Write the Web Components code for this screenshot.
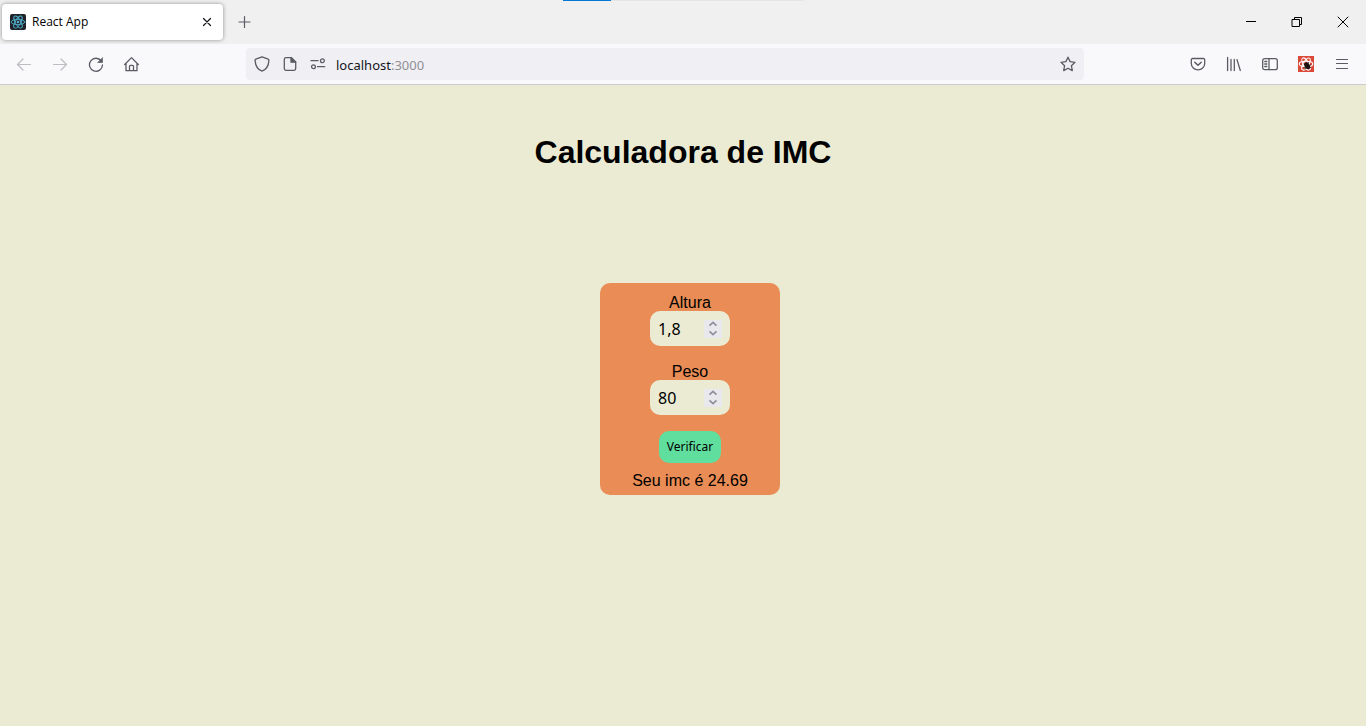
<!DOCTYPE html>
<html lang="pt-BR">
<head>
<meta charset="utf-8">
<title>React App</title>
<style>
html, body { margin: 0; height: 100%; }
body { font-family: "Liberation Sans", Arial, sans-serif; font-size: 16px; color: #000; background: #ebebd3; }
</style>
</head>
<body>
<browser-window>
  <tab-strip slot="tabs"><browser-tab>React App</browser-tab></tab-strip>
  <nav-bar slot="nav"><url-bar host="localhost" port=":3000"></url-bar></nav-bar>
  <imc-app></imc-app>
</browser-window>

<script>
const svg = (body, size = 16) =>
  `<svg width="${size}" height="${size}" viewBox="0 0 ${size} ${size}" fill="none" stroke="currentColor" stroke-width="1.3" stroke-linecap="round" stroke-linejoin="round" aria-hidden="true">${body}</svg>`;

const atom = (color, bg, width, extra = '') => `<rect width="16" height="16" ${bg} stroke="none"/>
  <g stroke="${color}" stroke-width="${width}"><ellipse cx="8" cy="8" rx="6.8" ry="2.7"/>
  <ellipse cx="8" cy="8" rx="6.8" ry="2.7" transform="rotate(60 8 8)"/>
  <ellipse cx="8" cy="8" rx="6.8" ry="2.7" transform="rotate(120 8 8)"/></g>
  <circle cx="8" cy="8" r="1.3" fill="${color}" stroke="none"/>${extra}`;

const icons = {
  react: svg(atom('#4fb3cf', 'rx="2" fill="#20232a"', .9)),
  devtools: svg(atom('#fff', 'fill="#db4a38"', 1.1,
    `<ellipse cx="9.200" cy="9.800" rx="2.500" ry="3.700" transform="rotate(-30 9.200 9.800)" fill="#1c1010" stroke="none"/>
     <path d="M6 8l6.500 3.500M6 11.500l6.500-2.500M7 13.300l3.500-6.800" stroke="#1c1010" stroke-width=".8"/>`)),
  tabClose: svg('<path d="M4.500 4.500l7 7M11.500 4.500l-7 7" stroke-width="1.2"/>'),
  plus: svg('<path d="M7.500 2.500v11M2 8h11" stroke-width="1.2"/>'),
  min: svg('<path d="M3 7.500h10" stroke-width="1" stroke-linecap="butt"/>'),
  restore: svg('<path d="M3.500 5.500h7v7h-7zM5.500 5V3.500h7v7H11" stroke-width="1" stroke-linejoin="miter" stroke-linecap="square"/>'),
  close: svg('<path d="M3 3l10 10M13 3L3 13" stroke-width="1"/>'),
  back: svg('<path d="M14.500 8.500h-13M7 3L1.500 8.500 7 14" stroke-width="1.2"/>'),
  forward: svg('<path d="M1.500 8.500h13M9 3l5.500 5.500L9 14" stroke-width="1.2"/>'),
  reload: svg('<path d="M13.300 5A6.500 6.500 0 1 0 14.500 9"/><path d="M14.500 2v4.500H10z" fill="currentColor" stroke-width=".7"/>'),
  home: svg('<path d="M.7 8.500L7.500 1.600l6.800 6.900M2 7.300v7.400h11V7.300M5.500 14.500V10.300a1 1 0 0 1 1-1h2a1 1 0 0 1 1 1v4.200"/>'),
  shield: svg('<path d="M8 .9l6.200 2.300c.6.200.8.600.7 1.200C14.600 9.500 12.500 13.500 8 15.200 3.500 13.500 1.400 9.500 1.100 4.400c-.1-.6.1-1 .7-1.200z"/>'),
  page: svg('<path d="M9.500 1.700H4A1.700 1.700 0 0 0 2.300 3.400v9.200A1.700 1.700 0 0 0 4 14.300h8a1.700 1.700 0 0 0 1.700-1.700V6z"/><path d="M9 1.700V6.200h4.700z" fill="currentColor"/>'),
  perms: svg('<path d="M1 4.700h7M7.500 10.700h7.200"/><circle cx="12.400" cy="4.700" r="1.900"/><circle cx="3.500" cy="10.700" r="1.900"/>'),
  star: svg('<path d="M8 1.200l2.100 4.400 4.900.7-3.600 3.400.9 4.900L8 12.200l-4.300 2.400.9-4.900L1 6.300l4.900-.7z"/>'),
  pocket: svg('<path d="M2.500 2.500h11a1.200 1.200 0 0 1 1.200 1.200V7.500a6.700 6.300 0 0 1-13.400 0V3.700a1.200 1.200 0 0 1 1.200-1.200z"/><path d="M4.800 6.300L8 9.300l3.200-3" stroke-width="1.500"/>'),
  library: svg('<path d="M1.600 1.500v13M5 3.500v11M8.300 3.500v11M11 3.600l3.300 10.900"/>'),
  sidebar: svg('<rect x=".7" y="2.700" width="14.600" height="11" rx="2"/><path d="M7 3v10.500M2.800 5.500h2M2.800 8h2M2.800 10.500h2"/>'),
  menu: svg('<path d="M2.500 3.500h11M2.500 7.500h11M2.500 12.500h11" stroke-width="1.200"/>'),
  up: '<svg width="10" height="6" viewBox="0 0 10 6" fill="none" stroke="#8f8f9d" stroke-width="1.700" aria-hidden="true"><path d="M1.500 4.700L5 1.400l3.500 3.300"/></svg>',
  down: '<svg width="10" height="6" viewBox="0 0 10 6" fill="none" stroke="#8f8f9d" stroke-width="1.700" aria-hidden="true"><path d="M1.500 1.300L5 4.600l3.500-3.300"/></svg>'
};

const define = (name, html, after) => customElements.define(name, class extends HTMLElement {
  constructor() {
    super();
    const t = document.createElement('template');
    t.innerHTML = html;
    this.attachShadow({ mode: 'open' }).append(t.content.cloneNode(true));
  }
  connectedCallback() { if (after) after(this, this.shadowRoot); }
});

define('icon-button', `<style>
  :host { display: flex; flex: none; width: 36px; height: 32px; color: #5b5b66; }
  :host([disabled]) { color: #bcbcc1; }
  button { all: unset; flex: 1; display: flex; align-items: center; justify-content: center; }
  svg { display: block; }
</style><button type="button"></button>`, (el, root) => {
  const b = root.querySelector('button');
  b.innerHTML = icons[el.getAttribute('icon')];
  b.setAttribute('aria-label', el.getAttribute('label'));
  b.disabled = el.hasAttribute('disabled');
});

define('browser-window', `<style>
  :host { display: flex; flex-direction: column; min-height: 100%; }
  main { flex: 1; background: #ebebd3; }
</style><slot name="tabs"></slot><slot name="nav"></slot><main><slot></slot></main>`);

define('tab-strip', `<style>
  :host { display: flex; align-items: center; position: relative; height: 44px; padding-left: 2px; background: #f0f0f0; }
  .load { position: absolute; top: 0; left: 0; right: 0; margin: 0 auto; width: 241px; height: 1px; background: #e5e5e5; }
  .load i { display: block; width: 20%; height: 1px; background: #0078d7; }
  .new { margin-left: 4px; }
  .win { display: flex; margin-left: auto; }
  .win icon-button { width: 46px; color: #000; }
</style>
<div class="load"><i></i></div>
<slot></slot>
<icon-button class="new" icon="plus" label="Nova aba"></icon-button>
<div class="win">
  <icon-button icon="min" label="Minimizar"></icon-button>
  <icon-button icon="restore" label="Restaurar"></icon-button>
  <icon-button icon="close" label="Fechar"></icon-button>
</div>`);

define('browser-tab', `<style>
  :host { display: flex; align-items: center; box-sizing: border-box; width: 221px; height: 36px; padding-left: 8px; border-radius: 4px; background: #fff; box-shadow: 0 0 4px rgba(0,0,0,.4); font: 12px/18px "Open Sans", sans-serif; }
  svg { display: block; margin-right: 6px; }
  span { flex: 1; }
  icon-button { width: 32px; color: #15141a; }
</style>${icons.react}<span><slot></slot></span><icon-button icon="tabClose" label="Fechar aba"></icon-button>`);

define('nav-bar', `<style>
  :host { display: flex; align-items: center; height: 40px; padding: 0 6px; background: #f9f9fb; border-bottom: 1px solid #ccccce; }
  ::slotted(url-bar) { flex: 1; margin: 0 96px; }
</style>
<icon-button icon="back" label="Voltar" disabled></icon-button>
<icon-button icon="forward" label="Avançar" disabled></icon-button>
<icon-button icon="reload" label="Recarregar"></icon-button>
<icon-button icon="home" label="Início"></icon-button>
<slot></slot>
<icon-button icon="pocket" label="Pocket"></icon-button>
<icon-button icon="library" label="Biblioteca"></icon-button>
<icon-button icon="sidebar" label="Painel lateral"></icon-button>
<icon-button icon="devtools" label="React Developer Tools"></icon-button>
<icon-button icon="menu" label="Menu"></icon-button>`);

define('url-bar', `<style>
  :host { display: flex; align-items: center; height: 32px; padding: 0 2px; box-sizing: border-box; border-radius: 4px; background: #f0f0f4; font: 13px/18px "Noto Sans", sans-serif; color: #15141a; }
  icon-button { width: 28px; }
  p { flex: 1; margin: 2px 4px 0; }
  .port { color: #8f8f94; }
</style>
<icon-button icon="shield" label="Proteção"></icon-button>
<icon-button icon="page" label="Informações do site"></icon-button>
<icon-button icon="perms" label="Permissões"></icon-button>
<p><span class="host"></span><span class="port"></span></p>
<icon-button icon="star" label="Favoritar"></icon-button>`, (el, root) => {
  root.querySelector('.host').textContent = el.getAttribute('host');
  root.querySelector('.port').textContent = el.getAttribute('port');
});

define('number-field', `<style>
  :host { display: flex; flex-direction: column; align-items: center; padding-top: 2px; line-height: 16px; }
  .box { display: flex; align-items: center; box-sizing: border-box; width: 80px; height: 35px; padding: 0 8px; border-radius: 10px; background: #ebebd3; }
  input { flex: 1; min-width: 0; padding: 0; border: 0; outline: 0; background: none; color: #000; font: 16px/20px "Noto Sans", sans-serif; }
  .spin { display: flex; flex-direction: column; width: 18px; height: 18px; background: #e9e9ed; }
  .spin button { all: unset; flex: 1; display: flex; align-items: center; justify-content: center; }
</style>
<label for="n"><slot></slot></label>
<div class="box"><input id="n" type="text" inputmode="decimal">
<div class="spin"><button type="button" aria-label="Aumentar">${icons.up}</button><button type="button" aria-label="Diminuir">${icons.down}</button></div></div>`, (el, root) => {
  const input = root.querySelector('input');
  const read = () => parseFloat(input.value.replace(',', '.')) || 0;
  input.value = el.getAttribute('value');
  root.querySelectorAll('button').forEach((b, i) => b.onclick = () => {
    const step = Number(el.getAttribute('step'));
    input.value = String(+(read() + (i ? -step : step)).toFixed(2)).replace('.', ',');
  });
  el.read = read;
});

define('imc-app', `<style>
  :host { display: flex; flex-direction: column; align-items: center; padding-top: 48px; }
  h1 { margin: 0; font-size: 32px; line-height: 38px; }
  form { display: flex; flex-direction: column; align-items: center; gap: 16px; box-sizing: border-box; width: 180px; margin: 112px 0 0 14px; padding: 10px 0 5px; border-radius: 10px; background: #e98c55; }
  button { height: 32px; padding: 0 8px; border: 0; border-radius: 10px; background: #60de9e; color: #000; font: 12px/18px "Noto Sans", sans-serif; }
  output { margin-top: -8px; line-height: 19px; }
</style>
<h1>Calculadora de IMC</h1>
<form>
  <number-field class="h" value="1,8" step="0.1">Altura</number-field>
  <number-field class="w" value="80" step="1">Peso</number-field>
  <button>Verificar</button>
  <output>Seu imc é 24.69</output>
</form>`, (el, root) => {
  root.querySelector('form').onsubmit = e => {
    e.preventDefault();
    const h = root.querySelector('.h').read(), w = root.querySelector('.w').read();
    root.querySelector('output').textContent = 'Seu imc é ' + (w / (h * h)).toFixed(2);
  };
});
</script>
</body>
</html>
